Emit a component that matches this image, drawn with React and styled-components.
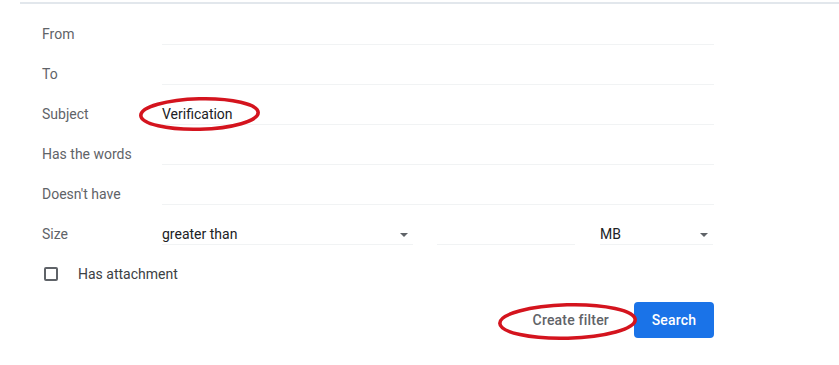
import React from "react";
import styled, { createGlobalStyle } from "styled-components";

const Global = createGlobalStyle`
  html, body { margin: 0; padding: 0; background: #fff; }
  body { font-family: Roboto, "Noto Sans", Arial, sans-serif; }
  * { box-sizing: border-box; }
`;

const Page = styled.div`
  width: 839px;
  height: 365px;
  padding: 2px 0 0 20px;
  background: #fff;
  overflow: hidden;
`;

const Panel = styled.div`
  border-top: 2px solid #e2e7ec;
  padding: 20px 0 0 22px;
`;

const Form = styled.form`
  width: 672px;
  display: flex;
  flex-direction: column;
  gap: 19px;
`;

const Row = styled.div`
  display: grid;
  grid-template-columns: 120px 1fr;
  align-items: start;
`;

const Label = styled.label`
  font-size: 14px;
  line-height: 20px;
  color: #5f6368;
  white-space: nowrap;
`;

const Field = styled.div`
  position: relative;
  height: 21px;
  border-bottom: 1px solid #f1f3f4;
  font-size: 14px;
  line-height: 20px;
  color: #202124;
`;

const SizeGroup = styled.div`
  display: grid;
  grid-template-columns: 251px 138px 114px;
  column-gap: 24px;
  justify-content: start;
  & > :nth-child(3) { margin-left: 1px; }
`;

const Select = styled.div`
  height: 21px;
  border-bottom: 1px solid #f1f3f4;
  display: flex;
  align-items: center;
  justify-content: space-between;
  font-size: 14px;
  line-height: 20px;
  color: #202124;
  padding-right: ${(p) => p.$arrowPad || 5}px;
`;

const Arrow = styled.span`
  width: 0;
  height: 0;
  border-left: 4px solid transparent;
  border-right: 4px solid transparent;
  border-top: 4px solid #5f6368;
  margin-top: 1px;
`;

const CheckRow = styled.div`
  display: flex;
  align-items: center;
  height: 20px;
  gap: 20px;
  padding-left: 2px;
`;

const Box = styled.span`
  width: 14px;
  height: 14px;
  border: 2px solid #5f6368;
  border-radius: 2px;
`;

const CheckText = styled.span`
  font-size: 14px;
  line-height: 20px;
  color: #3c4043;
`;

const Actions = styled.div`
  display: flex;
  justify-content: flex-end;
  gap: 1px;
  margin-top: -1px;
`;

const TextButton = styled.button`
  position: relative;
  height: 36px;
  padding: 0 24px;
  border: 0;
  background: transparent;
  font-family: inherit;
  font-size: 14px;
  font-weight: 500;
  letter-spacing: 0.2px;
  color: #5f6368;
`;

const PrimaryButton = styled.button`
  height: 36px;
  width: 80px;
  border: 0;
  border-radius: 4px;
  background: #1a73e8;
  color: #fff;
  font-family: inherit;
  font-size: 14px;
  font-weight: 500;
  letter-spacing: 0.2px;
`;

const Mark = styled.svg`
  position: absolute;
  left: ${(p) => p.$l}px;
  top: ${(p) => p.$t}px;
  width: ${(p) => p.$w}px;
  height: ${(p) => p.$h}px;
  overflow: visible;
  pointer-events: none;
`;

function Ellipse({ l, t, w, h }) {
  const cx = w / 2;
  const cy = h / 2;
  return (
    <Mark $l={l} $t={t} $w={w} $h={h} viewBox={`0 0 ${w} ${h}`}>
      <ellipse
        cx={cx}
        cy={cy}
        rx={cx - 1.8}
        ry={cy - 1.8}
        fill="none"
        stroke="#d4141e"
        strokeWidth="3.6"
        transform={`rotate(-1.5 ${cx} ${cy})`}
      />
    </Mark>
  );
}

const rows = [
  { label: "From" },
  { label: "To" },
  { label: "Subject", value: "Verification", marked: true },
  { label: "Has the words" },
  { label: "Doesn't have" },
];

export default function App() {
  return (
    <>
      <Global />
      <Page>
        <Panel>
          <Form onSubmit={(e) => e.preventDefault()}>
            {rows.map((r) => (
              <Row key={r.label}>
                <Label>{r.label}</Label>
                <Field>
                  {r.value}
                  {r.marked && <Ellipse l={-23} t={-7} w={121} h={34} />}
                </Field>
              </Row>
            ))}
            <Row>
              <Label>Size</Label>
              <SizeGroup>
                <Select $arrowPad={5}>
                  <span>greater than</span>
                  <Arrow />
                </Select>
                <Field />
                <Select $arrowPad={5}>
                  <span>MB</span>
                  <Arrow />
                </Select>
              </SizeGroup>
            </Row>
            <CheckRow>
              <Box />
              <CheckText>Has attachment</CheckText>
            </CheckRow>
            <Actions>
              <TextButton type="button">
                Create filter
                <Ellipse l={-11} t={1} w={139} h={37} />
              </TextButton>
              <PrimaryButton type="submit">Search</PrimaryButton>
            </Actions>
          </Form>
        </Panel>
      </Page>
    </>
  );
}
